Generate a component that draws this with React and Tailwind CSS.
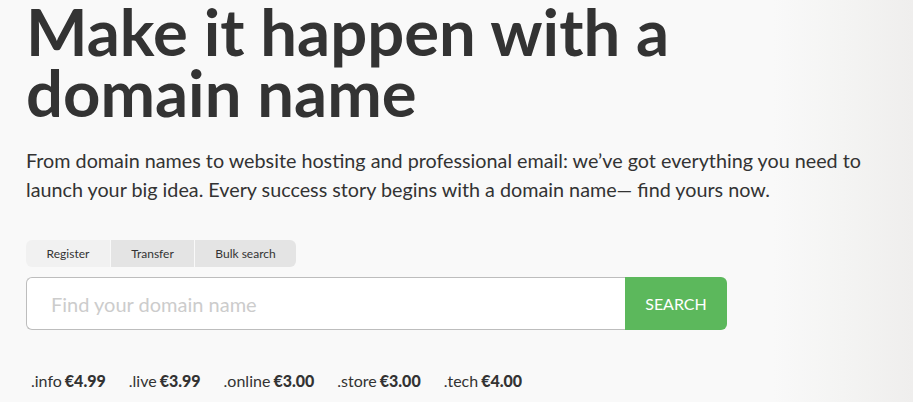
import React from "react";

const tlds = [
  { name: ".info", price: "€4.99" },
  { name: ".live", price: "€3.99" },
  { name: ".online", price: "€3.00" },
  { name: ".store", price: "€3.00" },
  { name: ".tech", price: "€4.00" },
];

export default function App() {
  return (
    <div className="relative h-[402px] w-full overflow-hidden bg-[#f9f9f9] font-['Lato',sans-serif] text-[#333]">
      {/* faint photo on the right */}
      <div className="pointer-events-none absolute inset-y-0 right-0 w-[140px] bg-gradient-to-r from-transparent via-[#f4f4f3] to-[#efeeed]" />

      <div className="relative pl-[26px] pt-[1px]">
        <h1 className="text-[65.2px] font-bold leading-[61px] text-[#333]">
          Make it happen with a<br />domain name
        </h1>

        <p className="mt-[23px] text-[19.75px] leading-[29px] text-[#333]">
          From domain names to website hosting and professional email: we’ve got everything you need to
          <br />
          launch your big idea. Every success story begins with a domain name— find yours now.
        </p>

        <div className="mt-[36px] flex h-[27px] w-[270px] overflow-hidden rounded-[6px] text-[12px]">
          <button className="w-[84px] bg-[#f1f1f1]">Register</button>
          <button className="ml-px w-[83px] bg-[#e4e4e4]">Transfer</button>
          <button className="ml-px flex-1 bg-[#e4e4e4]">Bulk search</button>
        </div>

        <div className="mt-[10px] flex h-[53px] w-[701px]">
          <div className="flex flex-1 items-center rounded-l-[6px] border border-r-0 border-[#bdbdbd] bg-white pl-[24px] text-[20px] text-[#cccccc]">
            Find your domain name
          </div>
          <button className="w-[102px] rounded-r-[6px] bg-[#5cb85c] text-[16px] text-white">
            SEARCH
          </button>
        </div>

        <div className="mt-[41px] flex pl-[5px] text-[16px] leading-[20px]">
          {tlds.map((t) => (
            <span key={t.name} className="mr-[23px]">
              {t.name}
              <span className="ml-[3px] font-black">{t.price}</span>
            </span>
          ))}
        </div>
      </div>
    </div>
  );
}
